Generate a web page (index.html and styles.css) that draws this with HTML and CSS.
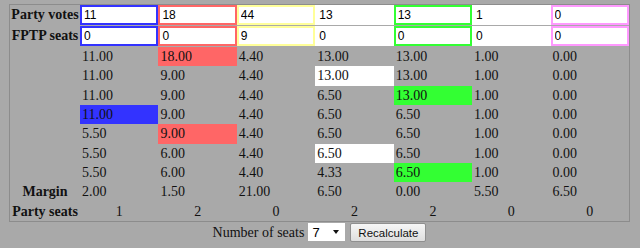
FILE: index.html
```html
<!DOCTYPE html>
<html>
<head>
<meta charset="utf-8">
<link rel="stylesheet" href="styles.css">
</head>
<body>
<table class="grid">
  <colgroup><col class="c-label"><col><col><col><col><col><col><col></colgroup>
  <tr class="in-row">
    <th>Party votes</th>
    <td><input class="p1" value="11"></td>
    <td><input class="p2" value="18"></td>
    <td><input class="p3" value="44"></td>
    <td><input class="p4" value="13"></td>
    <td><input class="p5" value="13"></td>
    <td><input class="p6" value="1"></td>
    <td><input class="p7" value="0"></td>
  </tr>
  <tr class="in-row">
    <th>FPTP seats</th>
    <td><input class="p1" value="0"></td>
    <td><input class="p2" value="0"></td>
    <td><input class="p3" value="9"></td>
    <td><input class="p4" value="0"></td>
    <td><input class="p5" value="0"></td>
    <td><input class="p6" value="0"></td>
    <td><input class="p7" value="0"></td>
  </tr>
  <tr class="q"><th></th><td>11.00</td><td class="hl-red">18.00</td><td>4.40</td><td>13.00</td><td>13.00</td><td>1.00</td><td>0.00</td></tr>
  <tr class="q"><th></th><td>11.00</td><td>9.00</td><td>4.40</td><td class="hl-white">13.00</td><td>13.00</td><td>1.00</td><td>0.00</td></tr>
  <tr class="q"><th></th><td>11.00</td><td>9.00</td><td>4.40</td><td>6.50</td><td class="hl-green">13.00</td><td>1.00</td><td>0.00</td></tr>
  <tr class="q"><th></th><td class="hl-blue">11.00</td><td>9.00</td><td>4.40</td><td>6.50</td><td>6.50</td><td>1.00</td><td>0.00</td></tr>
  <tr class="q"><th></th><td>5.50</td><td class="hl-red">9.00</td><td>4.40</td><td>6.50</td><td>6.50</td><td>1.00</td><td>0.00</td></tr>
  <tr class="q"><th></th><td>5.50</td><td>6.00</td><td>4.40</td><td class="hl-white">6.50</td><td>6.50</td><td>1.00</td><td>0.00</td></tr>
  <tr class="q"><th></th><td>5.50</td><td>6.00</td><td>4.40</td><td>4.33</td><td class="hl-green">6.50</td><td>1.00</td><td>0.00</td></tr>
  <tr class="q"><th>Margin</th><td>2.00</td><td>1.50</td><td>21.00</td><td>6.50</td><td>0.00</td><td>5.50</td><td>6.50</td></tr>
  <tr class="q seats"><th>Party seats</th><td>1</td><td>2</td><td>0</td><td>2</td><td>2</td><td>0</td><td>0</td></tr>
</table>
<div class="controls">
  <span class="lbl">Number of seats</span>
  <span class="sel"><span class="sel-val">7</span><span class="sel-arrow"></span></span>
  <button class="btn">Recalculate</button>
</div>
</body>
</html>
```
FILE: styles.css
```css
html, body {
  margin: 0;
  background: #a9a9a9;
}
body {
  padding: 4px 0 0 9px;
  font-family: "Liberation Serif", "Times New Roman", serif;
  font-size: 14px;
  color: #111;
}
.grid {
  width: 621px;
  table-layout: fixed;
  border-collapse: separate;
  border-spacing: 0;
  border: 1px solid #8c8c8c;
}
.c-label { width: 70px; }
.grid th {
  font-weight: bold;
  text-align: center;
  white-space: nowrap;
  padding: 0;
  color: #111;
}
.grid td {
  padding: 0 0 0 2px;
  white-space: nowrap;
}
.in-row td, .in-row th {
  padding: 0 0 1px 0;
  height: 20px;
}
.in-row input {
  display: block;
  box-sizing: border-box;
  width: 100%;
  height: 20px;
  margin: 0;
  padding: 0 2px;
  border: 2px solid #fff;
  background: #fff;
  font-family: "Liberation Sans", Arial, sans-serif;
  font-size: 12px;
  color: #000;
  outline: none;
}
.p1 { border-color: #3333ff !important; }
.p2 { border-color: #ff6666 !important; }
.p3 { border-color: #ffff99 !important; }
.p4 { border-color: #ffffff !important; }
.p5 { border-color: #33ff33 !important; }
.p6 { border-color: #ffffff !important; }
.p7 { border-color: #ff99ff !important; }
.q td, .q th {
  height: 19.33px;
  line-height: 19.33px;
}
.seats td {
  text-align: center;
  padding: 0;
}
.hl-red { background: #ff6666; }
.hl-blue { background: #3333ff; }
.hl-green { background: #33ff33; }
.hl-white { background: #ffffff; }
.controls {
  width: 621px;
  display: flex;
  justify-content: center;
  align-items: center;
  gap: 4px;
  height: 21px;
}
.lbl {
  font-size: 14px;
  margin-top: 2px;
}
.sel {
  display: inline-flex;
  align-items: center;
  justify-content: space-between;
  box-sizing: border-box;
  width: 37px;
  height: 18px;
  background: #fff;
  padding: 0 6px 0 4px;
  font-family: "Liberation Sans", Arial, sans-serif;
  font-size: 13px;
  color: #000;
}
.sel-arrow {
  width: 0;
  height: 0;
  border-left: 3px solid transparent;
  border-right: 3px solid transparent;
  border-top: 4px solid #111;
}
.btn {
  box-sizing: border-box;
  width: 76px;
  height: 19px;
  margin-left: 1px;
  margin-top: 1px;
  padding: 0;
  border: 1px solid #8f8f8f;
  border-radius: 2px;
  background: linear-gradient(#f6f6f6, #dedede);
  font-family: "Liberation Sans", Arial, sans-serif;
  font-size: 11.5px;
  color: #111;
}
```
